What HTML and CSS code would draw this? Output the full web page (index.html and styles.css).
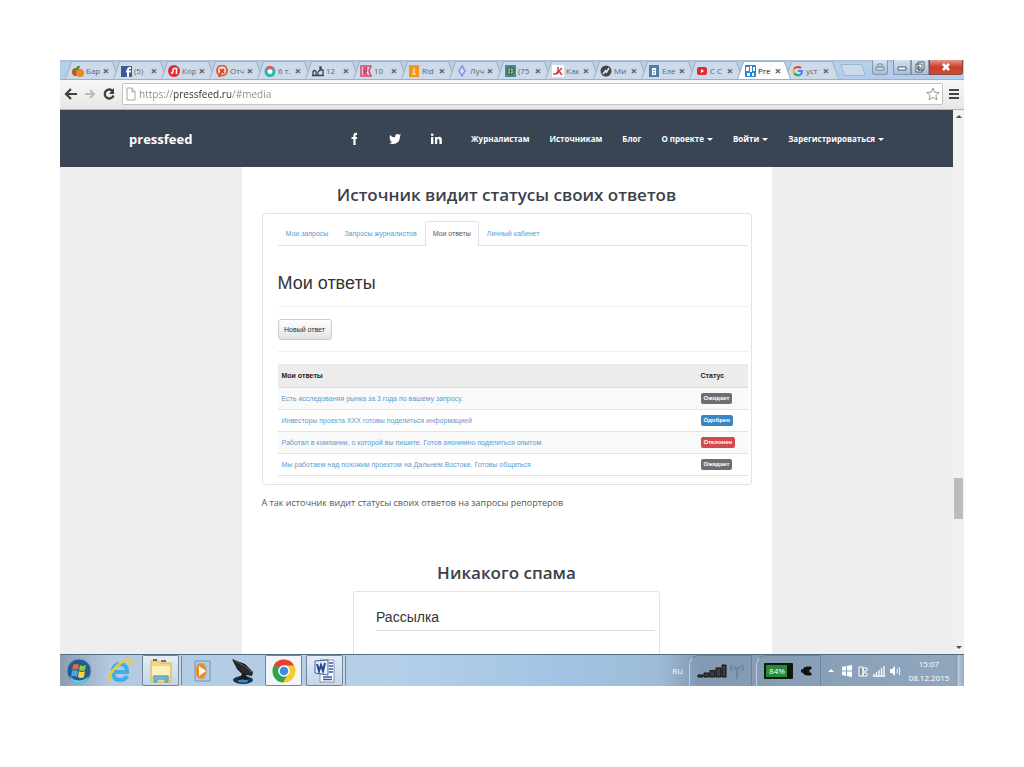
FILE: index.html
```html
<!DOCTYPE html>
<html lang="ru">
<head>
<meta charset="utf-8">
<title>Pressfeed</title>
<link rel="stylesheet" href="styles.css">
</head>
<body>
<div class="browser">
  <header class="tabstrip">
    <div class="tabs">
      <div class="tab"><svg class="fav" viewBox="0 0 12 12"><circle cx="4" cy="7" r="4" fill="#a8622c"/><circle cx="8" cy="8" r="4" fill="#e8892b"/><path d="M4 4Q5 0 8 1L7 4z" fill="#4c8a35"/></svg><button class="tab-name">Бар</button><button class="x" aria-label="Закрыть">×</button></div>
      <div class="tab"><svg class="fav" viewBox="0 0 12 12"><path fill="#3b5a97" d="M1 1h11v11H1z"/><path fill="none" stroke="#fff" stroke-width="2" d="M11 3H9.500Q8 3 8 5v7M6 6.500h5"/></svg><button class="tab-name">(5)</button><button class="x" aria-label="Закрыть">×</button></div>
      <div class="tab"><svg class="fav" viewBox="0 0 12 12"><circle cx="6" cy="6" r="6" fill="#e52838"/><path fill="none" stroke="#fff" stroke-width="1.500" d="M3 8h1.500L5.500 3.500h3V9"/></svg><button class="tab-name">Кор</button><button class="x" aria-label="Закрыть">×</button></div>
      <div class="tab"><svg class="fav" viewBox="0 0 12 12"><circle cx="6" cy="5.500" r="5" fill="#fbe5d8" stroke="#d8613d" stroke-width="2"/><path fill="none" stroke="#c9472d" stroke-width="2" d="M3 12l2-5 3-3M4 4l4 4"/></svg><button class="tab-name">Отч</button><button class="x" aria-label="Закрыть">×</button></div>
      <div class="tab"><svg class="fav" viewBox="0 0 12 12"><circle cx="6" cy="6.500" r="4" fill="#fff" stroke="#23b9ac" stroke-width="3"/><path fill="none" stroke="#ef5267" stroke-width="3" d="M3 3.500Q6 1 9 3.500"/></svg><button class="tab-name">6 т.</button><button class="x" aria-label="Закрыть">×</button></div>
      <div class="tab"><svg class="fav" viewBox="0 0 12 12"><path fill="none" stroke="#3b424b" stroke-width="1.300" d="M0 10.500h12M1 10V7q0-1.500 1.500-1.500T4 7v3M6 10V7l2-2V2h1v3h2v5"/></svg><button class="tab-name">12</button><button class="x" aria-label="Закрыть">×</button></div>
      <div class="tab"><svg class="fav" viewBox="0 0 12 12"><path fill="#f4c5d0" stroke="#cf4a6b" stroke-width="1.500" d="M1 1h10L9 6l2 5H1z"/><path fill="none" stroke="#b93459" stroke-width="1.300" d="M4 10V3h2.500v3H4l3 4"/></svg><button class="tab-name">10</button><button class="x" aria-label="Закрыть">×</button></div>
      <div class="tab"><svg class="fav" viewBox="0 0 12 12"><path fill="#f49520" d="M1 0h10v12H1z"/><path stroke="#ffe2a8" stroke-width="1.500" d="M6 3v5M4 9h4"/></svg><button class="tab-name">Rid</button><button class="x" aria-label="Закрыть">×</button></div>
      <div class="tab"><svg class="fav" viewBox="0 0 12 12"><path fill="#dce3ff" stroke="#8097e8" stroke-width="1.500" d="M6 1l3 5-3 5-3-5zM6 0v3M6 9v3"/></svg><button class="tab-name">Луч</button><button class="x" aria-label="Закрыть">×</button></div>
      <div class="tab"><svg class="fav" viewBox="0 0 12 12"><path fill="#3c8e9c" d="M1 0h11v12H1z"/><circle cx="6.500" cy="6" r="3.500" fill="#d0b878" stroke="#42694e" stroke-width="1.500"/><path stroke="#42694e" d="M4 6h5M6.500 3v6"/></svg><button class="tab-name">(75</button><button class="x" aria-label="Закрыть">×</button></div>
      <div class="tab"><svg class="fav" viewBox="0 0 12 12"><path fill="#fff" d="M0 0h12v12H0z"/><path fill="none" stroke="#dc3445" stroke-width="1.500" d="M1 9h3l1-2M6 2v7M10 3L7 6l3 4"/></svg><button class="tab-name">Как</button><button class="x" aria-label="Закрыть">×</button></div>
      <div class="tab"><svg class="fav" viewBox="0 0 12 12"><circle cx="6" cy="6" r="5.500" fill="#3f454c"/><path stroke="#dfe5ea" stroke-width="1.600" d="M3 9l3-4M6 8l3-5"/></svg><button class="tab-name">Ми</button><button class="x" aria-label="Закрыть">×</button></div>
      <div class="tab"><svg class="fav" viewBox="0 0 12 12"><path fill="#527da8" d="M1 0h10v12H1z"/><path fill="#fff" d="M4 3h4v7H4z"/><path stroke="#527da8" d="M5 5.500h2M5 8h2"/></svg><button class="tab-name">Еле</button><button class="x" aria-label="Закрыть">×</button></div>
      <div class="tab"><svg class="fav" viewBox="0 0 12 12"><rect x="1" y="2" width="10" height="8" rx="2" fill="#dc2f38"/><path fill="#fff" d="M5 4l3 2-3 2z"/></svg><button class="tab-name">С С</button><button class="x" aria-label="Закрыть">×</button></div>
      <div class="tab current"><svg class="fav" viewBox="0 0 12 12"><rect x="1" width="11" height="12" rx="1" fill="#2585d8"/><path fill="#fff" d="M2 2h3v4H2zM6 1h2v6H6zM9 2h2v4H9zM3 8h3v3H3zM8 8h2v3H8z"/></svg><button class="tab-name">Pre</button><button class="x" aria-label="Закрыть">×</button></div>
      <div class="tab"><svg class="fav" viewBox="0 0 12 12"><g fill="none" stroke-width="2"><path stroke="#e64235" d="M2 4Q3 2 6 2q2 0 3 1"/><path stroke="#f5b912" d="M2 4q-1 2 0 4"/><path stroke="#35a853" d="M2 8q2 3 6 2"/><path stroke="#4285f4" d="M6 6h4q0 3-2 4"/></g></svg><button class="tab-name">уст</button><button class="x" aria-label="Закрыть">×</button></div>
      <button class="newtab" aria-label="Новая вкладка"></button>
    </div>
    <div class="controls">
      <button class="ctl user" aria-label="Профиль"><svg viewBox="0 0 14 12"><path d="M3 9V6h8v3zM5 6V3h4v3z" fill="#dce9f3" stroke="#778595"/></svg></button>
      <button class="ctl" aria-label="Свернуть"><svg viewBox="0 0 14 12"><path d="M3 6h8v3H3z" fill="#fff" stroke="#4c5968"/></svg></button>
      <button class="ctl" aria-label="Развернуть"><svg viewBox="0 0 14 12"><path d="M5 1h6v8H5zM3 3h6v8H3zM5 6h2v3H5z" fill="#fff" stroke="#4c5968"/></svg></button>
      <button class="ctl close" aria-label="Закрыть окно"><svg viewBox="0 0 14 12"><path d="M4 3l6 6M10 3L4 9" stroke="#fff" stroke-width="2.500"/></svg></button>
    </div>
  </header>
  <div class="toolbar">
    <button class="tool" aria-label="Назад"><svg viewBox="0 0 14 14"><path d="M13 7H3M7 2L2 7l5 5" fill="none" stroke="#3f3f3f" stroke-width="2.200"/></svg></button>
    <button class="tool" aria-label="Вперёд"><svg viewBox="0 0 14 14"><path d="M2 7h9M7 3l4 4-4 4" fill="none" stroke="#bcbcbc" stroke-width="2"/></svg></button>
    <button class="tool" aria-label="Обновить"><svg viewBox="0 0 14 14"><path d="M11 4.500A4.500 4.500 0 1 0 11.500 8.500" fill="none" stroke="#3f3f3f" stroke-width="2.300"/><path d="M12 1v6H7z" fill="#3f3f3f"/></svg></button>
    <div class="omnibox">
      <svg class="doc" viewBox="0 0 10 14"><path d="M1 1h5l3 3.500V13H1zM6 1v4h3" fill="#fff" stroke="#a5a5a5"/></svg>
      <input class="url" type="text" aria-label="Адрес" value="https://pressfeed.ru/#media">
      <button class="tool star" aria-label="Закладка"><svg viewBox="0 0 14 14"><path d="M7 1l1.700 4.200 4.600.3-3.500 2.900 1.200 4.400L7 10.400l-4 2.400 1.200-4.400L.7 5.500l4.600-.3z" fill="#fff" stroke="#979797"/></svg></button>
    </div>
    <button class="tool menu" aria-label="Меню"><svg viewBox="0 0 12 14"><path d="M1 3h10M1 7h10M1 11h10" stroke="#454545" stroke-width="2.200"/></svg></button>
  </div>
  <div class="viewport">
    <div class="page">
      <nav class="nav">
        <a class="brand" href="#">pressfeed</a>
        <div class="links">
          <a class="soc" href="#" aria-label="Facebook"><svg viewBox="0 0 12 14"><path d="M9 1.800H8Q6.500 1.800 6.500 3.500V13M3.500 6H9" fill="none" stroke="#fff" stroke-width="2.200"/></svg></a>
          <a class="soc" href="#" aria-label="Twitter"><svg viewBox="0 0 12 14"><path d="M1 3q2 2.300 5 2.500Q5.800 2 8.500 2q1.200 0 1.800.8L12 2.300 11 4v.8Q10.500 12 4 12q-2.500 0-4-1 2 0 3.300-1Q1.500 9.800 1 8.200h1Q.5 7.500.4 5.500l1 .3Q0 4.500 1 3z" fill="#fff"/></svg></a>
          <a class="soc" href="#" aria-label="LinkedIn"><svg viewBox="0 0 12 14"><path d="M1 5h2.400v7H1zM5 5h2.200v1Q8 4.800 9.400 4.800q2.400 0 2.400 3V12H9.400V8.300q0-1.500-1-1.500-1.200 0-1.200 1.700V12H5z" fill="#fff"/><circle cx="2.200" cy="2.800" r="1.300" fill="#fff"/></svg></a>
          <a href="#">Журналистам</a>
          <a href="#">Источникам</a>
          <a href="#">Блог</a>
          <a class="drop" href="#">О проекте</a>
          <a class="drop" href="#">Войти</a>
          <a class="drop" href="#">Зарегистрироваться</a>
        </div>
      </nav>
      <main class="column">
        <h2 class="title">Источник видит статусы своих ответов</h2>
        <section class="card">
          <div class="subtabs">
            <a href="#">Мои запросы</a><a href="#">Запросы журналистов</a><a class="on" href="#">Мои ответы</a><a href="#">Личный кабинет</a>
          </div>
          <h1 class="heading">Мои ответы</h1>
          <div class="actions"><button class="btn">Новый ответ</button></div>
          <table class="answers">
            <thead><tr><th>Мои ответы</th><th class="status">Статус</th></tr></thead>
            <tbody>
              <tr><td><a href="#">Есть исследования рынка за 3 года по вашему запросу.</a></td><td><span class="badge">Ожидает</span></td></tr>
              <tr><td><a href="#">Инвесторы проекта ХХХ готовы поделиться информацией</a></td><td><span class="badge blue">Одобрен</span></td></tr>
              <tr><td><a href="#">Работал в компании, о которой вы пишите. Готов анонимно поделиться опытом</a></td><td><span class="badge red">Отклонен</span></td></tr>
              <tr><td><a href="#">Мы работаем над похожим проектом на Дальнем Востоке. Готовы общаться</a></td><td><span class="badge">Ожидает</span></td></tr>
            </tbody>
          </table>
        </section>
        <p class="caption">А так источник видит статусы своих ответов на запросы репортеров</p>
        <h2 class="title second">Никакого спама</h2>
        <section class="card mail"><h3 class="mail-title">Рассылка</h3></section>
      </main>
    </div>
    <div class="scrollbar"><span class="up"></span><span class="thumb"></span><span class="down"></span></div>
  </div>
  <footer class="taskbar">
    <button class="task" aria-label="Пуск"><svg viewBox="0 0 28 28"><circle cx="14" cy="14" r="12" fill="#245b8f" stroke="#7a9bb8"/><path d="M4 19q10 9 20 0-3 7-10 7T4 19z" fill="#56d3ee"/><path d="M8 8q3-2 6 0l-1 5q-3-2-6 0z" fill="#ec6a32"/><path d="M15 8q3 2 6 0l-1 5q-3 2-6 0z" fill="#8fca3c"/><path d="M7 14q3-2 6 0l-1 6q-3-2-6 0z" fill="#45a6e8"/><path d="M14 14q3 2 6 0l-1 6q-3 2-6 0z" fill="#fbd140"/></svg></button>
    <button class="task" aria-label="Internet Explorer"><svg viewBox="0 0 28 28"><path d="M21 19q-2 4-7 4-7 0-7-8t7-8q7 0 7 8H9" fill="none" stroke="#3eaee9" stroke-width="4"/><path d="M4 24Q1 19 11 9q10-9 14-5 1 2-1 5" fill="none" stroke="#efca3c" stroke-width="2.500"/></svg></button>
    <button class="task open stack" aria-label="Проводник"><svg viewBox="0 0 28 28"><path d="M4 4h7l2 2h11v19H4z" fill="#f1d981" stroke="#d6b958"/><path d="M5 9h18v9H5z" fill="#fbf0b6"/><path d="M6 3h4M14 4h5" stroke="#b5533d" stroke-width="2"/><path d="M7 25v-6h14v6h-3v-3h-8v3z" fill="#73bde6" stroke="#4d94c4"/></svg></button>
    <button class="task" aria-label="Проигрыватель"><svg viewBox="0 0 28 28"><path d="M7 4h15v20H7z" fill="#a9cce8" stroke="#7196ba"/><ellipse cx="13" cy="14" rx="5.500" ry="8" fill="#ee8b28"/><path d="M11 9l7 5-7 5z" fill="#fff"/></svg></button>
    <button class="task" aria-label="Программа"><svg viewBox="0 0 28 28"><ellipse cx="14" cy="23" rx="10" ry="4" fill="#17344f"/><path d="M3 2l13 5 8 8-1 4-6-1 2 5H9l4-6-5-5z" fill="#1c1c1e"/><path d="M5 4l9 6 9 5-1 3-8-2-5-5z" fill="#2b2b2e"/><path d="M5 3l10 6 8 6" stroke="#62656a" fill="none"/><ellipse cx="14" cy="24" rx="5" ry="1.500" fill="#448aca"/></svg></button>
    <button class="task open bright" aria-label="Chrome"><svg viewBox="0 0 28 28"><circle cx="14" cy="14" r="11.500" fill="#f7ca31"/><path d="M14 14L4 8q3-5.500 10-5.500 7 0 10 6H14z" fill="#df4436"/><path d="M4 8q-3 6 0 12 3 5 9 5.500L18 17l-4-3z" fill="#2fa253"/><circle cx="14" cy="14" r="5.800" fill="#fff"/><circle cx="14" cy="14" r="4.300" fill="#4489df"/></svg></button>
    <button class="task open stack" aria-label="Word"><svg viewBox="0 0 28 28"><path d="M9 3h14v22H9z" fill="#fff" stroke="#8193b4"/><path d="M12 20h9M12 22.500h9M18 6h4M18 9h4M18 12h4M18 15h4" stroke="#365a9c" stroke-width="1.500"/><path d="M4 4l13-1v15L4 16z" fill="#e9f0fa" stroke="#4263a2"/><path d="M6 7l2 7 2-6 2 6 2-8" fill="none" stroke="#25488f" stroke-width="2"/></svg></button>
    <div class="tray">
      <span class="lang">RU</span>
      <span class="panel signal"><svg viewBox="0 0 48 20"><path d="M1 16v-2h5v2zM7 16v-4h5v4zM13 16V9.500h5V16zM19 16V7h5v9zM25 16V4h4v12z" fill="#3b3f42" stroke="#111"/><path d="M35 4q-2 3 0 6M45 4q2 3 0 6M37 5l3 4 3-4M40 8v10" stroke="#72869b" stroke-width="2" fill="none"/></svg></span>
      <span class="panel power"><span class="charge">84%</span><svg viewBox="0 0 12 14"><path d="M10 3H6Q2 3 2 7t4 4h4V9H8V5h2zM0 6h3v2H0z" fill="#111" stroke="#111"/></svg></span>
      <span class="icons">
        <svg viewBox="0 0 12 12"><path d="M3 7l3-3 3 3z" fill="#fff"/></svg>
        <svg viewBox="0 0 12 12"><path d="M1 2l4-1v4.500H1zM6 1l5-1v5.500H6zM1 6.500h4V11l-4-1zM6 6.500h5V12l-5-1z" fill="#fff"/></svg>
        <svg viewBox="0 0 12 12"><path d="M2 2h4v9H2zM6 3h4v3H6zM6 8h4v3H6z" fill="#8796a4" stroke="#fff"/></svg>
        <svg viewBox="0 0 12 12"><path d="M1 10V9M3.500 10V7M6 10V5M8.500 10V3M11 10V1M0 11h12" stroke="#fff" stroke-width="1.300"/></svg>
        <svg viewBox="0 0 12 12"><path d="M1 4h2l3-3v10L3 8H1z" fill="#fff"/><path d="M8 4q1 2 0 4M10 2q2 4 0 8" stroke="#fff" fill="none"/></svg>
      </span>
      <span class="clock"><span>15:07</span><span>08.12.2015</span></span>
      <button class="desk" aria-label="Показать рабочий стол"></button>
    </div>
  </footer>
</div>
</body>
</html>
```
FILE: styles.css
```css
* { box-sizing: border-box; }
body {
  margin: 0;
  height: 100vh;
  min-height: 500px;
  padding: 60px 60px 81px;
  background: #fff;
  font-family: "Open Sans", "Noto Sans", sans-serif;
}
button { border: 0; padding: 0; margin: 0; background: none; font: inherit; color: inherit; }
a { text-decoration: none; color: inherit; }
h1, h2, h3, p { margin: 0; }
svg { display: block; }
.browser { height: 100%; display: flex; flex-direction: column; overflow: hidden; }

.tabstrip { display: flex; justify-content: space-between; height: 20px; flex: none; background: linear-gradient(#a9bfd6, #b7d0ec 3px, #b3cdea); padding-left: 5px; border-bottom: 1px solid #a5adb5; }
.tabs { display: flex; }
.tab { position: relative; width: 54px; margin-right: -6px; padding: 2px 7px 0; display: flex; align-items: center; z-index: 0; }
.tab::before, .tab::after { content: ""; position: absolute; z-index: -1; inset: 1px 0 0; background: #a3b4c8; clip-path: polygon(6px 0, calc(100% - 6px) 0, 100% 100%, 0 100%); }
.tab::after { inset: 2px 1px 0; background: #cddaea; }
.tab.current { z-index: 2; }
.tab.current::after { background: #fbfcfd; }
.fav { width: 12px; height: 12px; flex: none; }
.tab-name { width: 14px; margin-left: 2px; font: 8px/14px "Open Sans", sans-serif; color: #5d6670; text-align: left; white-space: nowrap; overflow: hidden; }
.current .tab-name { color: #222; }
.x { flex: 1; font: bold 11px/14px "Open Sans", sans-serif; color: #55595e; }
.newtab { width: 22px; height: 12px; margin: 4px 0 0 9px; border: 1px solid #9db3cb; background: #c9daee; transform: skewX(20deg); border-radius: 2px; }
.controls { display: flex; height: 15px; }
.ctl { width: 18px; background: linear-gradient(#d3e1ee, #a9bfd5); border: 1px solid #8496aa; border-top: 0; display: flex; align-items: center; justify-content: center; }
.ctl svg { width: 14px; height: 12px; }
.ctl.user { margin-right: 5px; width: 16px; border-radius: 0 0 3px 3px; }
.ctl.close { width: 34px; margin-right: 1px; background: linear-gradient(#e39a8c, #c93f2c 50%, #d0492f); border-color: #8c4a45; border-radius: 0 0 3px 0; }

.toolbar { display: flex; align-items: center; flex: none; height: 30px; padding: 2px 4px 3px; gap: 5px; background: linear-gradient(#f8f8f8, #e6e6e6); border-bottom: 1px solid #b0b3b6; }
.tool { width: 14px; height: 14px; flex: none; }
.menu { width: 12px; }
.omnibox { display: flex; align-items: center; flex: 1; height: 22px; padding: 0 2px 0 3px; margin-left: 1px; background: #fff; border: 1px solid #c3c3c3; border-radius: 2px; }
.doc { width: 10px; height: 14px; flex: none; }
.url { flex: 1; min-width: 0; border: 0; padding: 0; margin-left: 3px; outline: 0; font: 10px/18px "Open Sans", sans-serif; color: transparent; background: linear-gradient(90deg, #8a8a8a 35px, #2c2c2c 35px, #2c2c2c 92px, #8a8a8a 92px); background-clip: text; -webkit-background-clip: text; }

.viewport { flex: 1; min-height: 0; display: flex; background: #eee; }
.page { flex: 1; overflow: hidden; }
.nav { height: 57px; padding: 0 69px; display: flex; justify-content: space-between; align-items: center; background: #394553; color: #fff; }
.brand { font-size: 13px; font-weight: 700; }
.links { display: flex; align-items: center; gap: 20px; font-size: 8px; font-weight: 700; white-space: nowrap; }
.soc { width: 21px; }
.soc svg { width: 12px; height: 14px; }
.drop::after { content: ""; display: inline-block; margin-left: 3px; vertical-align: 1px; border: 3px solid transparent; border-top-color: #fff; border-bottom: 0; }
.column { max-width: 530px; margin: 0 auto; padding: 14px 20px 0; background: #fff; min-height: 100%; }
.title { font-size: 17px; line-height: 28px; font-weight: 600; text-align: center; color: #3b404b; white-space: nowrap; }
.card { margin-top: 4px; padding: 7px 3px 8px 15px; border: 1px solid #e2e2e2; border-radius: 3px; font-family: "Liberation Sans", sans-serif; }
.subtabs { display: flex; height: 25px; border-bottom: 1px solid #e2e2e2; font-size: 7px; line-height: 23px; color: #5c9bd1; }
.subtabs a { padding: 0 7px; border: 1px solid transparent; border-bottom: 0; }
.subtabs .on { height: 25px; background: #fff; border-color: #e2e2e2; border-radius: 3px 3px 0 0; color: #555; }
.heading { padding: 23px 0 8px; border-bottom: 1px solid #eee; font-size: 18px; line-height: 29px; font-weight: 400; color: #333; }
.actions { padding: 12px 0 11px; border-bottom: 1px solid #eee; }
.btn { display: block; width: 54px; height: 21px; border: 1px solid #ccc; border-radius: 3px; background: linear-gradient(#fff, #e2e2e2); font-size: 7px; color: #333; }
.answers { width: 100%; margin-top: 12px; border-collapse: collapse; font-size: 7px; }
.answers th { height: 23px; padding: 0 4px; text-align: left; background: #ececec; color: #222; border-bottom: 1px solid #ddd; }
.answers td { height: 22px; padding: 0 4px; border-bottom: 1px solid #e2e2e2; color: #5c9bd1; white-space: nowrap; }
.answers tbody tr:nth-child(odd) { background: #f9f9f9; }
.status { width: 51px; }
.badge { display: inline-block; padding: 0 3px; border-radius: 2px; background: #6e6e6e; color: #fff; font-size: 6px; line-height: 11px; font-weight: 700; }
.badge.blue { background: #3b86c4; }
.badge.red { background: #d34a4a; }
.caption { margin-top: 9px; font-size: 9px; line-height: 18px; color: #555; }
.second { margin-top: 47px; }
.mail { width: 307px; margin: 4px auto 0; padding: 13px 4px 30px 22px; }
.mail-title { font-size: 14px; line-height: 25px; font-weight: 400; color: #333; border-bottom: 1px solid #ddd; }

.scrollbar { width: 11px; background: #f1f1f1; display: flex; flex-direction: column; align-items: center; padding: 5px 0; }
.up { border: 3px solid transparent; border-bottom-color: #505050; border-top: 0; }
.down { margin-top: auto; border: 3px solid transparent; border-top-color: #505050; border-bottom: 0; }
.thumb { width: 9px; height: 41px; margin-top: 360px; background: #bcbcbc; }

.taskbar { flex: none; height: 32px; display: flex; background: linear-gradient(90deg, #8b9db0, #b3cae1 50px, #b5cfe9 330px, #a2c4e4 500px, #9dbbd7 600px, #8299b2 640px, #90a7bf); border-top: 1px solid #566b7f; }
.task { width: 37px; margin-right: 4px; display: flex; align-items: center; justify-content: center; }
.task svg { width: 28px; height: 28px; }
.open { border: 1px solid #71869c; background: linear-gradient(#e3edf6, #c3d6e8); border-radius: 2px; }
.stack { box-shadow: 3px 0 0 -1px #c9d9e8, 4px 0 0 -1px #71869c; }
.bright { background: #f2f6fa; }
.tray { margin-left: auto; display: flex; align-items: center; color: #fff; }
.lang { font-size: 8px; margin-right: 6px; }
.panel { height: 100%; display: flex; align-items: center; justify-content: center; border: 1px solid #6f849a; border-left-color: #bed0e0; border-bottom: 0; border-radius: 10px 0 0; margin-right: 4px; }
.signal { width: 63px; }
.signal svg { width: 48px; height: 20px; }
.power { width: 65px; gap: 8px; }
.power svg { width: 12px; height: 14px; }
.charge { width: 29px; border: 2px solid #101a12; background: linear-gradient(90deg, #258c36 21px, #111 21px); font-size: 8px; line-height: 12px; text-align: center; padding-right: 3px; border-radius: 1px; }
.icons { display: flex; gap: 4px; }
.icons svg { width: 12px; height: 12px; }
.clock { display: flex; flex-direction: column; width: 54px; text-align: center; font-size: 8px; line-height: 14px; margin-left: 1px; }
.desk { width: 8px; height: 100%; background: linear-gradient(90deg, #7288a0, #b9cbdc 2px, #94abc2); }
```
